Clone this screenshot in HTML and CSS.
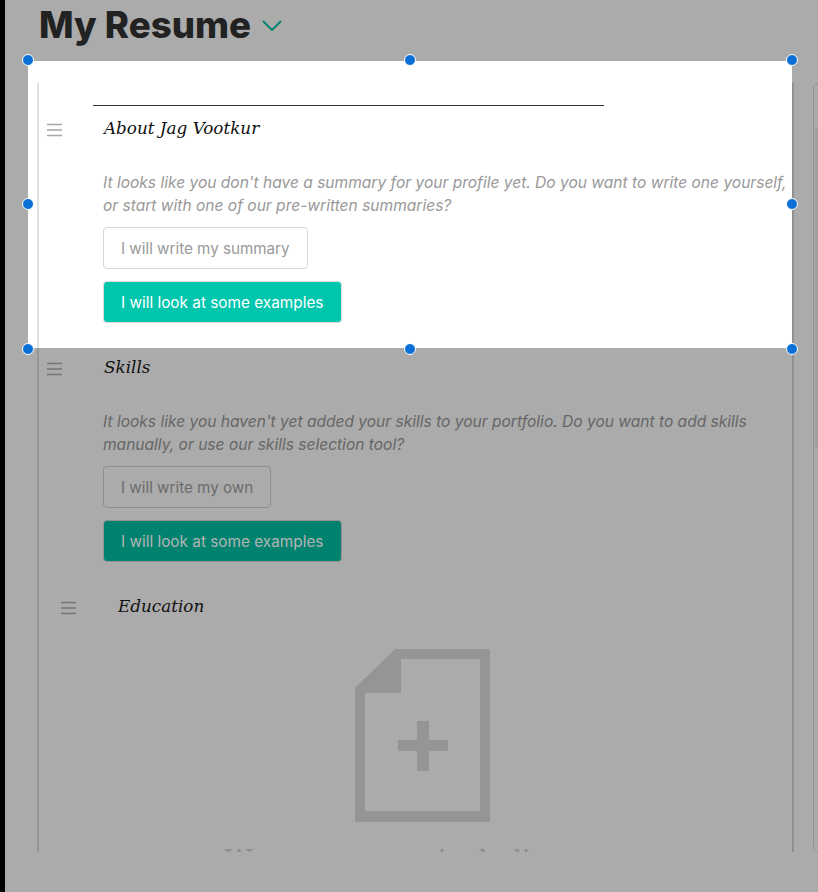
FILE: index.html
```html
<!DOCTYPE html>
<html lang="en">
<head>
    <meta charset="UTF-8">
    <title>My Resume</title>
    <link rel="stylesheet" href="styles.css">
</head>
<body>
    <div class="app">
        <header class="page-header">
            <h1>My Resume</h1>
            <svg class="chevron" width="20" height="11" viewBox="0 0 20 11"><path d="M1 1l9 9 9-9" fill="none" stroke="#00866f" stroke-width="2"/></svg>
        </header>

        <div class="selection">
            <span class="handle tl"></span>
            <span class="handle tc"></span>
            <span class="handle tr"></span>
            <span class="handle ml"></span>
            <span class="handle mr"></span>
            <span class="handle bl"></span>
            <span class="handle bc"></span>
            <span class="handle br"></span>
        </div>

        <main class="workspace">
            <div class="frame">
                <div class="rule"></div>

                <section class="block lit">
                    <svg class="drag" width="15" height="14" viewBox="0 0 15 14"><path d="M0 1.5h15M0 7h15M0 12.500h15" stroke="#a8a8a8" stroke-width="1.500"/></svg>
                    <div class="block-body">
                        <h2>About Jag Vootkur</h2>
                        <p>It looks like you don't have a summary for your profile yet. Do you want to write one yourself, or start with one of our pre-written summaries?</p>
                        <a class="btn btn-outline">I will write my summary</a>
                        <a class="btn btn-primary">I will look at some examples</a>
                    </div>
                </section>

                <section class="block dim">
                    <svg class="drag" width="15" height="14" viewBox="0 0 15 14"><path d="M0 1.5h15M0 7h15M0 12.500h15" stroke="#757575" stroke-width="1.500"/></svg>
                    <div class="block-body">
                        <h2>Skills</h2>
                        <p>It looks like you haven't yet added your skills to your portfolio. Do you want to add skills manually, or use our skills selection tool?</p>
                        <a class="btn btn-outline">I will write my own</a>
                        <a class="btn btn-primary">I will look at some examples</a>
                    </div>
                </section>

                <section class="block dim nested">
                    <svg class="drag" width="15" height="14" viewBox="0 0 15 14"><path d="M0 1.5h15M0 7h15M0 12.500h15" stroke="#757575" stroke-width="1.500"/></svg>
                    <div class="block-body">
                        <h2>Education</h2>
                    </div>
                </section>

                <div class="empty">
                    <svg class="doc" width="135" height="173" viewBox="0 0 135 173">
                        <path fill="#959595" fill-rule="evenodd" d="M40 0H135V173H0V39ZM46 10V44H10V162H125V10Z"/>
                        <path fill="#959595" d="M43 91H62V72H74V91H93V102H74V122H62V102H43Z"/>
                    </svg>
                    <div class="empty-title">We encourage including</div>
                </div>
            </div>

            <aside class="side-panel"><div class="scroll-thumb"></div></aside>
        </main>
    </div>
</body>
</html>
```

FILE: styles.css
```css
* {
    box-sizing: border-box;
}

html, body {
    margin: 0;
    height: 100%;
}

body {
    background-color: #ababab;
    border-left: 5px solid #000;
    font-family: Inter, sans-serif;
    overflow: hidden;
}

.app {
    position: relative;
    height: 892px;
}

.page-header {
    display: flex;
    align-items: center;
    height: 49px;
    padding-left: 34px;
}

h1 {
    margin: 0;
    font-size: 36.7px;
    font-weight: 800;
    color: #222;
}

.chevron {
    margin: 1px 0 0 11px;
}

/* white cut-out in the dimmed page */
.selection {
    position: absolute;
    left: 23px;
    top: 61px;
    width: 764px;
    height: 287px;
    background: #fff;
}

.handle {
    position: absolute;
    width: 12px;
    height: 12px;
    border: 1px solid #fff;
    border-radius: 50%;
    background: #0a6fd6;
    z-index: 3;
}

.tl { left: -6px; top: -7px; }
.tc { left: 376px; top: -7px; }
.tr { right: -6px; top: -7px; }
.ml { left: -6px; top: 137px; }
.mr { right: -6px; top: 137px; }
.bl { left: -6px; bottom: -7px; }
.bc { left: 376px; bottom: -7px; }
.br { right: -6px; bottom: -7px; }

.workspace {
    position: relative;
    display: flex;
    height: 769px;
    margin-top: 34px;
    padding-left: 32px;
}

.frame {
    flex: none;
    width: 757px;
    height: 769px;
    overflow: hidden;
    border-left: 2px solid rgba(0, 0, 0, .12);
    border-right: 2px solid rgba(0, 0, 0, .15);
}

.rule {
    width: 511px;
    height: 1px;
    margin: 22px 0 11px 54px;
    background: #333;
}

.block {
    display: flex;
    align-items: flex-start;
    padding-left: 8px;
}

.drag {
    flex: none;
    margin: 6px 41px 0 0;
}

.block-body {
    display: flex;
    flex-direction: column;
    align-items: flex-start;
    flex: 1;
    padding-bottom: 33px;
}

.nested {
    padding-left: 22px;
}

.nested .block-body {
    padding-bottom: 0;
}

h2 {
    margin: 0 0 32px 1px;
    font-family: "DejaVu Serif", serif;
    font-size: 16.8px;
    font-style: italic;
    font-weight: 400;
    line-height: 22px;
    color: #111;
}

.nested h2 {
    margin-bottom: 0;
}

.block p {
    margin: 0 0 10px;
    font-size: 15.55px;
    font-style: italic;
    line-height: 23px;
}

.btn {
    display: flex;
    align-items: center;
    height: 42px;
    padding: 0 17px;
    border-radius: 4px;
    font-size: 15.2px;
}

.btn + .btn {
    margin-top: 12px;
}

.btn-primary {
    font-size: 15.35px;
    padding-right: 18px;
}

.lit p { color: #999; }
.lit .btn-outline { border: 1px solid #d6d6d6; color: #999; background: #fff; }
.lit .btn-primary { border: 1px solid #dcdcdc; color: #fff; background: #00c6ad; }

.dim p { color: #666; }
.dim .btn-outline { border: 1px solid #8f8f8f; color: #6b6b6b; }
.dim .btn-primary { border: 1px solid #939393; color: #b4b4b4; background: #00826f; }

.empty {
    display: flex;
    flex-direction: column;
    align-items: center;
    padding: 32px 0 0 14px;
}

.doc {
    flex: none;
}

.empty-title {
    margin: 23px 55px 0 0;
    font-family: "DejaVu Serif", serif;
    font-size: 27px;
    word-spacing: 5px;
    white-space: nowrap;
    color: #8c8c8c;
}

.side-panel {
    flex: none;
    width: 5px;
    height: 769px;
    margin-left: 19px;
    border: 1px solid rgba(0, 0, 0, .15);
    border-right: none;
    border-radius: 6px 0 0 6px;
    padding: 44px 0 0 1px;
}

.scroll-thumb {
    width: 3px;
    height: 320px;
    background: #9f9f9f;
}
```
